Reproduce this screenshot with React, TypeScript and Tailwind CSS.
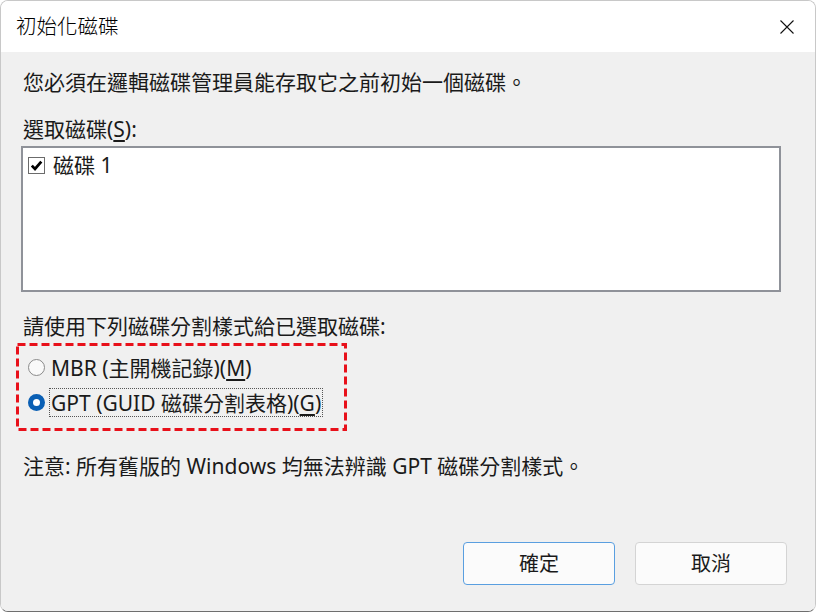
import React from "react";

const font = { fontFamily: '"Noto Sans", "Noto Sans CJK TC", sans-serif' };

export default function App() {
  return (
    <div
      className="w-[816px] h-[612px] overflow-hidden rounded-[8px] border border-[#c8c8c8] border-b-[#6e6e6e] flex flex-col text-[#1a1a1a]"
      style={font}
    >
      {/* Title bar */}
      <div className="h-[51px] shrink-0 bg-white flex items-center justify-between pl-[15px] pr-[20px]">
        <span className="text-[20.5px] font-light leading-none text-black">初始化磁碟</span>
        <svg width="16" height="16" viewBox="0 0 16 16">
          <path d="M1.5 1.5 L14.5 14.5 M14.5 1.5 L1.5 14.5" stroke="#111" strokeWidth="1.1" fill="none" />
        </svg>
      </div>

      {/* Body */}
      <div className="flex-1 bg-[#f0f0f0] flex flex-col pl-[20px] pr-[28px] pt-[16px] pb-[26px] text-[21px] leading-[28px]">
        <div className="pl-[2px]">您必須在邏輯磁碟管理員能存取它之前初始一個磁碟。</div>

        <div className="pl-[2px] mt-[19px]">
          選取磁碟(<span className="underline underline-offset-[3px]">S</span>):
        </div>

        <div className="mt-[3px] w-[760px] h-[146px] bg-white border-2 border-[#8f9299] pl-[5px] pt-[8px]">
          <div className="flex items-center h-[18px]">
            <div className="w-[17px] h-[17px] border border-[#6b6b6b] bg-white flex items-center justify-center">
              <svg width="13" height="13" viewBox="0 0 13 13">
                <path d="M1.8 6.6 L5 9.9 L11.3 2.6" stroke="#000" strokeWidth="2.8" fill="none" strokeLinejoin="miter" />
              </svg>
            </div>
            <span className="ml-[8px] leading-none">磁碟 1</span>
          </div>
        </div>

        <div className="pl-[2px] mt-[20px]">請使用下列磁碟分割樣式給已選取磁碟:</div>

        <div className="relative -ml-[5px] mt-[3px] w-[331px] h-[88px] flex flex-col pl-[12px] pt-[10px]">
          <svg className="absolute inset-0 pointer-events-none" width="331" height="88">
            <rect x="1.5" y="1.5" width="328" height="85" fill="none" stroke="#e8101a" strokeWidth="3" strokeDasharray="8 4" />
          </svg>
          <div className="flex items-center h-[29px]">
            <div className="w-[17px] h-[17px] rounded-full border border-[#8a8a8a] bg-[#f9f9f9]" />
            <span className="ml-[5px] px-[1px]">
              MBR (主開機記錄)(<span className="underline underline-offset-[3px]">M</span>)
            </span>
          </div>
          <div className="flex items-center h-[29px] mt-[6px]">
            <div className="w-[17px] h-[17px] rounded-full bg-[#0a5fb4] flex items-center justify-center">
              <div className="w-[7px] h-[7px] rounded-full bg-white" />
            </div>
            <span className="ml-[4px] h-[29px] flex items-center border border-dotted border-[#555] px-[1px]">
              GPT (GUID 磁碟分割表格)(<span className="underline underline-offset-[3px]">G</span>)
            </span>
          </div>
        </div>

        <div className="pl-[2px] mt-[21px]">注意: 所有舊版的 Windows 均無法辨識 GPT 磁碟分割樣式。</div>

        <div className="mt-auto flex justify-end gap-[20px]">
          <button className="w-[152px] h-[43px] rounded-[4px] border border-[#5a9fe0] bg-[#fbfbfb] text-[20px] text-[#1a1a1a]" style={font}>
            確定
          </button>
          <button className="w-[152px] h-[43px] rounded-[4px] border border-[#d4d4d4] bg-[#fbfbfb] text-[20px] text-[#1a1a1a]" style={font}>
            取消
          </button>
        </div>
      </div>
    </div>
  );
}
